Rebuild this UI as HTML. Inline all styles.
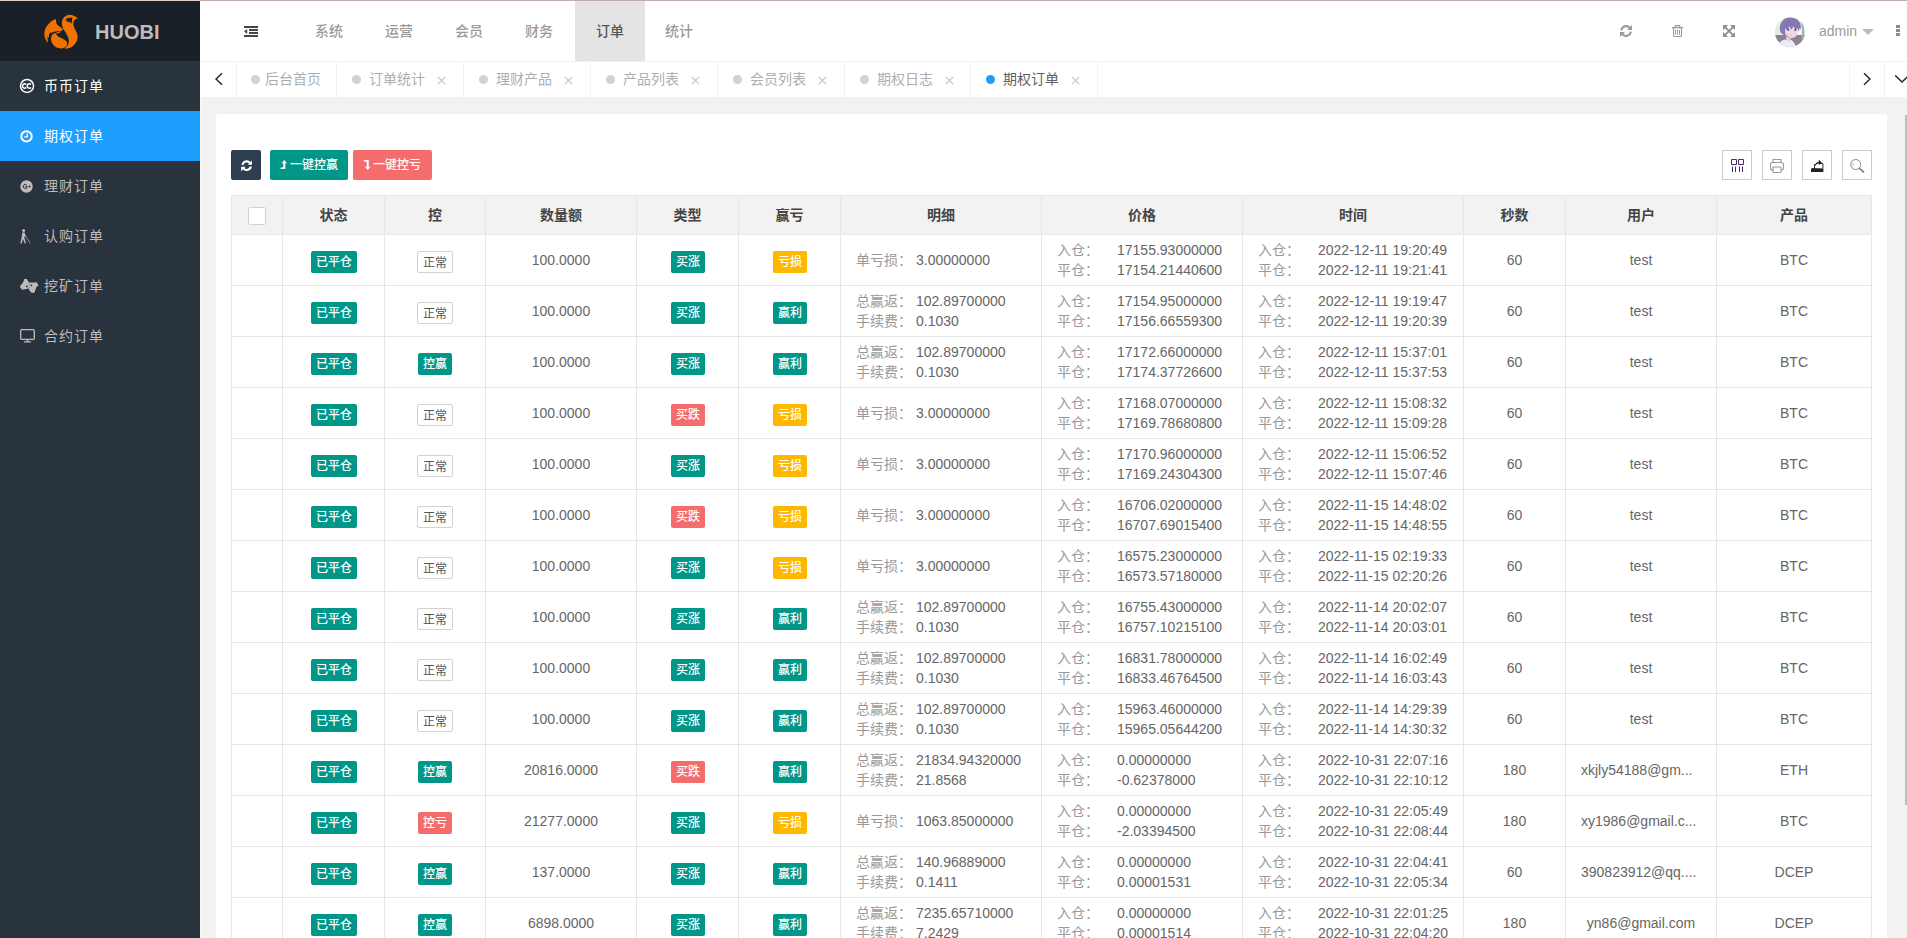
<!DOCTYPE html>
<html lang="zh-CN">
<head>
<meta charset="utf-8">
<title>HUOBI</title>
<style>
*{box-sizing:border-box;margin:0;padding:0}
html,body{width:1907px;height:938px;overflow:hidden;background:#f2f2f2;font-family:"Liberation Sans","Noto Sans CJK SC",sans-serif;font-size:14px;color:#666}
body{position:relative}
.abs{position:absolute}
#topline{left:0;top:0;width:1907px;height:1px;background:linear-gradient(90deg,#dccdc7 0,#dccdc7 200px,#c0aea8 200px);z-index:10}
/* sidebar */
#side{left:0;top:0;width:200px;height:938px;background:#28333e}
#logo{left:0;top:0;width:200px;height:61px;background:#192027}
#logo svg{position:absolute;left:38px;top:8px}
#logo h1{position:absolute;left:95px;top:20px;font-size:20px;line-height:24px;font-weight:bold;color:rgb(191,187,187);letter-spacing:0}
.mi{position:absolute;left:0;width:200px;height:50px;color:rgb(191,187,187);font-size:14px;line-height:50px;letter-spacing:1px}
.mi span{position:absolute;left:44px;top:0}
.mi svg{position:absolute}
.mi.on{background:#1e9fff;color:#fff}
.mi.hv{color:#fff}
/* header */
#header{left:200px;top:1px;width:1707px;height:60px;background:#fff}
.nav{position:absolute;top:0;height:60px;width:70px;text-align:center;line-height:60px;color:rgba(107,107,107,.7);font-size:14px;font-weight:500}
.nav.on{background:#e4e4e4;color:#565656}
/* tabs */
#tabs{left:200px;top:61px;width:1707px;height:36px;background:#fff;border-top:1px solid #f0f0f0}
.tab{position:absolute;top:0;height:35px;line-height:35px;border-right:1px solid #f2f2f2;color:#acafb1;font-size:14px}
.tab i{position:absolute;top:13px;width:9px;height:9px;border-radius:50%;background:#d2d2d2}
.tab.on{color:#5f5f5f}
.tab.on i{background:#1e9fff}
.tab b{position:absolute;font-weight:normal}
.tab svg{position:absolute}
/* card */
#card{left:216px;top:114px;width:1671px;height:900px;background:#fff;border-radius:3px}
.btn{position:absolute;top:150px;height:30px;border-radius:2px;color:#fff;font-size:12px;line-height:30px;white-space:nowrap;font-weight:500}
.tool{position:absolute;top:150px;width:30px;height:30px;border:1px solid #ccc;background:#fff}
.tool svg{position:absolute;left:0;top:0}
/* table */
#tbl{left:231px;top:195px;width:1641px;border-left:1px solid #e6e6e6;border-top:1px solid #e6e6e6;font-size:14px;color:#666}
.tr,.th{display:flex}
.th{height:39px;background:#f2f2f2;color:#444;font-weight:bold}
.tr{height:51px}
.c{flex:none;height:100%;border-right:1px solid #e6e6e6;border-bottom:1px solid #e6e6e6;display:flex;align-items:center;justify-content:center;white-space:nowrap;overflow:hidden}
.c.l{justify-content:flex-start;padding-left:15px}
.th .c{padding-bottom:3px}
.kv{line-height:20px}
.k{display:inline-block;width:60px;color:#999}
.cb{display:block;width:18px;height:18px;border:1px solid #d2d2d2;border-radius:2px;background:#fff;position:relative;left:-.5px;top:2.500px}
.bd{display:inline-block;height:22px;line-height:23px;padding:0 5px;font-size:12px;font-weight:500;border-radius:2px;color:#fff;position:relative;top:2px;left:.5px}
.bd.g{background:#009688}
.bd.r{background:#f56c6c}
.bd.o{background:#ffb800}
.bd.rim{background:#fff;color:#555;border:1px solid #d2d2d2;line-height:23px;font-weight:400;left:0}
.c2 .bd{left:0}
#sb{left:1905px;top:115px;width:2px;height:690px;background:#bdbdbd}
</style>
</head>
<body>
<div id="topline" class="abs"></div>

<div id="side" class="abs">
  <div id="logo" class="abs">
    <svg width="48" height="48" viewBox="0 0 48 48">
      <path fill="#f07300" d="M39.900 10.500C37.200 8 34.600 6.800 31.700 6.800 27.300 6.800 23.700 10.500 23.800 15.400 23.900 19 25.900 21.800 27.600 24.600 29.500 27.800 30.800 30.400 30.800 33.300 30.800 36.400 29.200 38.700 26.500 40.700 31 41.200 35 38.800 37.500 35.300 40 31.700 40.400 28 38.400 24.100 36.700 20.700 35.200 18 35.300 15.400 35.400 12.600 37 11 39.900 10.500Z"/>
      <path fill="#192027" d="M26.800 12.700L29 10.200 34.300 9.500 33.700 16 32.300 13.600 31.300 14.900 30.300 13.100 29.300 14.300 28.400 12.300Z"/>
      <path fill="#f07300" d="M17.800 10.900C14 12.100 10.500 15.300 8.200 18.900 6.200 22.100 5.700 26.100 7.100 30.200 7.700 32 8.700 33.500 10.100 34.500L9.300 28.600 10.900 29.800 11 26.600 12.500 24.300 13.200 25.100C15.600 23.300 19 22.700 22.400 23.500L25.200 21.200 21.500 18.400C19.800 17 18.600 16 18.400 15.400Z"/>
      <path fill="#f07300" d="M17.900 25C15 25.300 13 27.500 13 30.600 13 35.600 17 40.300 22.500 40.500 25 40.600 27.500 39.600 28.600 37.800 29.600 36 29.300 34.200 28.400 33.200 27 31.500 23 30 20.500 28.700 19 27.800 18.200 26.500 17.900 25Z"/>
      <path fill="#f07300" d="M18 24.600L22.600 23.800 21.600 25 18.400 25.400Z"/>
      <circle cx="17.700" cy="19.200" r=".7" fill="#c96000"/>
    </svg>
    <h1>HUOBI</h1>
  </div>

  <div class="mi hv" style="top:61px">
    <svg style="left:19px;top:17px" width="16" height="16" viewBox="0 0 16 16"><circle cx="8.050" cy="7.950" r="6.500" fill="none" stroke="#fff" stroke-width="1.500"/><path d="M7.300 6.400A2.200 2.200 0 1 0 7.300 9.500M12 6.400A2.200 2.200 0 1 0 12 9.500" fill="none" stroke="#fff" stroke-width="1.500"/></svg>
    <span>币币订单</span>
  </div>
  <div class="mi on" style="top:111px">
    <svg style="left:19.800px;top:18.600px" width="13" height="13" viewBox="0 0 13 13"><circle cx="6.500" cy="6.400" r="5.200" fill="none" stroke="#fff" stroke-width="2"/><path d="M7.300 3.500v3.300H4.200" fill="none" stroke="#fff" stroke-width="1.300"/></svg>
    <span>期权订单</span>
  </div>
  <div class="mi" style="top:161px">
    <svg style="left:20px;top:18.500px" width="13" height="13" viewBox="0 0 13 13"><circle cx="6.500" cy="6.500" r="6.200" fill="#bfbbbb"/><path d="M6.800 5.200a2 2 0 1 0 .4 1.500H5.400" fill="none" stroke="#28333e" stroke-width="1"/><path d="M9.600 5.400v2.200M8.500 6.500h2.200" stroke="#28333e" stroke-width=".8"/></svg>
    <span>理财订单</span>
  </div>
  <div class="mi" style="top:211px">
    <svg style="left:19px;top:18px" width="14" height="15" viewBox="0 0 14 15"><circle cx="4.600" cy="1.600" r="1.500" fill="#bfbbbb"/><path d="M3.200 3.600h2.400l1.400 4-1 .5-.6-1.500v2.200l1.600 5.400-1.300.4-1.700-4.600-1.500 4.700-1.300-.4 1.400-5.600z" fill="#bfbbbb"/><path d="M6.300 6.600l5 7.800" stroke="#bfbbbb" stroke-width=".7"/></svg>
    <span>认购订单</span>
  </div>
  <div class="mi" style="top:261px">
    <svg style="left:19px;top:18px" width="20" height="15" viewBox="0 0 20 15"><path d="M.8 7.700L4.600 2.600 5.200 0h2.600L10 3.500l6.100 0 1.300-.6 2.200 3.500-2.200 1.600-1.900 5.500-2.600.6-2.600-2.600L10 9.600 3 10.750z" fill="#bfbbbb"/><circle cx="7.800" cy="7.400" r=".9" fill="#28333e"/><circle cx="12.400" cy="6.400" r=".9" fill="#28333e"/><path d="M10 4v5" stroke="#28333e" stroke-width=".5" stroke-dasharray="1 1"/></svg>
    <span>挖矿订单</span>
  </div>
  <div class="mi" style="top:311px">
    <svg style="left:20px;top:18px" width="15" height="14" viewBox="0 0 15 14"><rect x=".7" y=".7" width="13.600" height="9.600" rx="1" fill="none" stroke="#bfbbbb" stroke-width="1.300"/><path d="M7.500 10.500v2M4 12.800h7" stroke="#bfbbbb" stroke-width="1.300"/></svg>
    <span>合约订单</span>
  </div>
</div>

<div id="header" class="abs">
  <svg class="abs" style="left:44px;top:25px" width="14" height="11" viewBox="0 0 14 11"><path d="M0 0h14v2H0zM5 3h9v2H5zM5 6h9v2H5zM0 9h14v2H0zM.1 5.500L3.200 2.900v5.200z" fill="#444"/></svg>
  <div class="nav" style="left:94px">系统</div>
  <div class="nav" style="left:164px">运营</div>
  <div class="nav" style="left:234px">会员</div>
  <div class="nav" style="left:304px">财务</div>
  <div class="nav on" style="left:375px">订单</div>
  <div class="nav" style="left:444px">统计</div>

  <!-- refresh -->
  <svg class="abs" style="left:1419.900px;top:23.800px" width="12.100" height="12.100" viewBox="0 0 14 14"><path d="M1.500 6.200A5.600 5.600 0 0 1 11.400 3.400M12.500 7.800A5.600 5.600 0 0 1 2.600 10.600" fill="none" stroke="#9a9a9a" stroke-width="2.400"/><path d="M14 0v5.800H8.200zM0 14V8.200h5.800z" fill="#9a9a9a"/></svg>
  <!-- trash -->
  <svg class="abs" style="left:1472px;top:23.800px" width="11" height="12.100" viewBox="0 0 11 12.100"><path d="M0 2.600h11M3.200 2.300V.6h4.600v1.700" fill="none" stroke="#9a9a9a" stroke-width="1.100"/><path d="M1.500 3v7.500a1 1 0 0 0 1 1h6a1 1 0 0 0 1-1V3" fill="none" stroke="#9a9a9a" stroke-width="1.100"/><path d="M3.500 4.800v4.800M5.500 4.800v4.800M7.500 4.800v4.800" stroke="#9a9a9a" stroke-width="1"/></svg>
  <!-- expand -->
  <svg class="abs" style="left:1523.100px;top:23.800px" width="12.100" height="12.100" viewBox="0 0 14 14"><path d="M2.500 2.500l9 9M11.500 2.500l-9 9" stroke="#8f8f8f" stroke-width="2.200"/><path d="M0 0h6L0 6zM14 0v6L8 0zM0 14V8L6 14zM14 14H8L14 8z" fill="#8f8f8f"/></svg>
  <!-- avatar -->
  <svg class="abs" style="left:1575px;top:16px" width="30" height="30" viewBox="0 0 30 30">
    <defs><clipPath id="av"><circle cx="15" cy="15" r="15"/></clipPath>
    <linearGradient id="avbg" x1="0" x2="1" y1="0" y2="0"><stop offset="0" stop-color="#dfe9dc"/><stop offset=".35" stop-color="#f1f5ee"/><stop offset="1" stop-color="#f7f8f6"/></linearGradient></defs>
    <g clip-path="url(#av)">
      <rect width="30" height="30" fill="url(#avbg)"/>
      <rect x="0" y="18.300" width="30" height="12" fill="#8a8391"/>
      <rect x="0" y="18" width="30" height=".8" fill="#a57a5c"/>
      <path d="M26.500 4c2.500 3 3.600 9 2.200 20l-2.200-2c.8-7 .8-12-1-17z" fill="#a3b0aa"/>
      <path d="M3.600 27c1.500-2.600 3.400-3.800 5.800-4.600l4.600 1.200 1.600-1.200c2.600 1.600 4.200 3.800 5 6.600-2 1-4 1.500-6 1.500-4 0-7.500-1.300-11-3.500z" fill="#efecf6"/>
      <path d="M10.800 19.500l4.500 1.500-.3 4.200-3.300-1.500z" fill="#ecd0da"/>
      <path d="M8.600 10h14v7.500c-1.600 2-3.800 3.400-6 3.800-3.200-.6-6-3-8-6.800z" fill="#f0d6de"/>
      <path d="M5 14C3.800 6.500 8 .5 15 .4c7.500-.1 12.300 5 10.600 12.600l-.9-2.200-.9 3.600-1.600-3.600-1.200 2.400-2.400-3.600-2.400 3-1.800-3.200-2.800 3.400-1.200-1.600c-.6 2.400-.6 4.800.6 7.200C8 18 6 16.500 5 14z" fill="#8379b6"/>
      <ellipse cx="13.200" cy="12.500" rx="1" ry="1.300" fill="#4e4a86"/>
      <ellipse cx="20.300" cy="12.800" rx=".9" ry="1.300" fill="#4e4a86"/>
      <ellipse cx="16.500" cy="18" rx=".5" ry=".4" fill="#c9858f"/>
    </g>
  </svg>
  <div class="abs" style="left:1619px;top:0;line-height:60px;font-size:14px;color:rgba(107,107,107,.7)">admin</div>
  <div class="abs" style="left:1662px;top:28px;width:0;height:0;border:6px solid transparent;border-top-color:rgba(160,160,160,.7)"></div>
  <div class="abs" style="left:1696px;top:24px;width:4px;height:3px;background:#8c8c8c;box-shadow:0 4px 0 #8c8c8c,0 8px 0 #8c8c8c"></div>
</div>

<div id="tabs" class="abs">
  <div class="tab" style="left:0;width:37px">
    <svg style="left:14px;top:10px" width="10" height="14" viewBox="0 0 10 14"><path d="M8 1.200L2 7l6 5.800" fill="none" stroke="#222" stroke-width="1.400"/></svg>
  </div>
  <div class="tab" style="left:37px;width:100px"><i style="left:14px"></i><b style="left:28px">后台首页</b></div>
  <div class="tab" style="left:137px;width:127px"><i style="left:15px"></i><b style="left:32px">订单统计</b><svg style="left:100px;top:14px" width="9" height="9" viewBox="0 0 9 9"><path d="M.8.800l7.400 7.400M8.200.8L.8 8.200" stroke="#c4c4c4" stroke-width="1.200"/></svg></div>
  <div class="tab" style="left:264px;width:127px"><i style="left:15px"></i><b style="left:32px">理财产品</b><svg style="left:100px;top:14px" width="9" height="9" viewBox="0 0 9 9"><path d="M.8.800l7.400 7.400M8.200.8L.8 8.200" stroke="#c4c4c4" stroke-width="1.200"/></svg></div>
  <div class="tab" style="left:391px;width:127px"><i style="left:15px"></i><b style="left:32px">产品列表</b><svg style="left:100px;top:14px" width="9" height="9" viewBox="0 0 9 9"><path d="M.8.800l7.400 7.400M8.200.8L.8 8.200" stroke="#c4c4c4" stroke-width="1.200"/></svg></div>
  <div class="tab" style="left:518px;width:127px"><i style="left:15px"></i><b style="left:32px">会员列表</b><svg style="left:100px;top:14px" width="9" height="9" viewBox="0 0 9 9"><path d="M.8.800l7.400 7.400M8.200.8L.8 8.200" stroke="#c4c4c4" stroke-width="1.200"/></svg></div>
  <div class="tab" style="left:645px;width:126px"><i style="left:15px"></i><b style="left:32px">期权日志</b><svg style="left:100px;top:14px" width="9" height="9" viewBox="0 0 9 9"><path d="M.8.800l7.400 7.400M8.200.8L.8 8.200" stroke="#c4c4c4" stroke-width="1.200"/></svg></div>
  <div class="tab on" style="left:771px;width:127px"><i style="left:15px"></i><b style="left:32px">期权订单</b><svg style="left:100px;top:14px" width="9" height="9" viewBox="0 0 9 9"><path d="M.8.800l7.400 7.400M8.200.8L.8 8.200" stroke="#c4c4c4" stroke-width="1.200"/></svg></div>
  <div class="tab" style="left:1649px;width:36px;border-left:1px solid #f2f2f2">
    <svg style="left:12px;top:10px" width="10" height="14" viewBox="0 0 10 14"><path d="M2 1.200L8 7l-6 5.800" fill="none" stroke="#222" stroke-width="1.400"/></svg>
  </div>
  <div class="tab" style="left:1685px;width:36px;border-right:none">
    <svg style="left:9px;top:12px" width="16" height="10" viewBox="0 0 16 10"><path d="M1.200 1.500L8 8l6.800-6.500" fill="none" stroke="#222" stroke-width="1.400"/></svg>
  </div>
</div>

<div class="abs" style="left:200px;top:97px;width:1px;height:841px;background:#fbf7f3"></div>
<div id="card" class="abs"></div>

<!-- toolbar -->
<div class="btn" style="left:231px;width:30px;background:#2c3e50">
  <svg class="abs" style="left:9.900px;top:9.800px" width="11.400" height="11.400" viewBox="0 0 14 14"><path d="M1.900 6A5.150 5.150 0 0 1 11 3.700M12.100 8A5.150 5.150 0 0 1 3 10.300" fill="none" stroke="#fff" stroke-width="2.600"/><path d="M13.800.3v5.500H8.300zM.2 13.700V8.200h5.500z" fill="#fff"/></svg>
</div>
<div class="btn" style="left:270px;width:78px;background:#009688">
  <svg class="abs" style="left:10px;top:10px" width="7" height="9" viewBox="0 0 7 9"><path d="M4.300 0L7 3.200H5.300V9H.2L1.500 7.300h1.800V3.200H1.600z" fill="#fff"/></svg>
  <span class="abs" style="left:20px;top:0">一键控赢</span>
</div>
<div class="btn" style="left:353px;width:79px;background:#f56c6c">
  <svg class="abs" style="left:10px;top:10px" width="7.500" height="10" viewBox="0 0 7.500 10"><path d="M4.700 10L7.500 6.700H5.700V0H.2L1.600 1.700h2.100v5H1.900z" fill="#fff"/></svg>
  <span class="abs" style="left:20px;top:0">一键控亏</span>
</div>

<div class="tool" style="left:1722px">
  <svg width="28" height="28" viewBox="0 0 28 28"><path d="M8.500 8.500h5v5h-5zM15.500 8.500h5v5h-5z" fill="none" stroke="#4f2a6a" stroke-width="1"/><path d="M9.500 15.500v5.500M12.500 15.500v5.500M16.500 15.500v5.500M19.500 15.500v5.500" stroke="#4f2a6a" stroke-width="1"/></svg>
</div>
<div class="tool" style="left:1762px">
  <svg width="28" height="28" viewBox="0 0 28 28"><path d="M10 12V8.500h8V12" fill="none" stroke="#9a9a9a" stroke-width="1.100"/><rect x="7.500" y="11.500" width="13" height="7.500" rx="2" fill="none" stroke="#9a9a9a" stroke-width="1.100"/><rect x="10" y="16" width="8" height="5.500" rx=".8" fill="#fff" stroke="#9a9a9a" stroke-width="1.100"/></svg>
</div>
<div class="tool" style="left:1802px">
  <svg width="28" height="28" viewBox="0 0 28 28"><path d="M9.300 17l-1.300 1v3h12.400v-3.500z" fill="#222"/><path d="M11.500 17.500v-4h1.500M16.500 12.500h3.400v5" fill="none" stroke="#2a2a40" stroke-width="1"/><path d="M12 15.500c.1-3 1.600-4.500 3.800-4.700V8.700l3 2.800-3 2.800v-1.900c-1.700 0-2.900.9-3.800 3.100z" fill="#222"/></svg>
</div>
<div class="tool" style="left:1842px">
  <svg width="28" height="28" viewBox="0 0 28 28"><circle cx="12.700" cy="13.500" r="5" fill="none" stroke="#8a8a8a" stroke-width="1"/><path d="M10.200 12a3.200 3.200 0 0 0 0 2.800" fill="none" stroke="#9ab" stroke-width=".8"/><path d="M16.500 17.300l4 3.700" stroke="#8a8a8a" stroke-width="1.800" stroke-linecap="round"/></svg>
</div>

<div id="tbl" class="abs">
  <div class="th"><div class="c" style="width:51px"><span class="cb"></span></div><div class="c" style="width:102px">状态</div><div class="c" style="width:101px">控</div><div class="c" style="width:151px">数量额</div><div class="c" style="width:102px">类型</div><div class="c" style="width:102px">赢亏</div><div class="c" style="width:201px">明细</div><div class="c" style="width:201px">价格</div><div class="c" style="width:221px">时间</div><div class="c" style="width:102px">秒数</div><div class="c" style="width:151px">用户</div><div class="c" style="width:155px">产品</div></div>
<div class="tr"><div class="c" style="width:51px"></div><div class="c" style="width:102px"><span class="bd g">已平仓</span></div><div class="c c2" style="width:101px"><span class="bd rim">正常</span></div><div class="c" style="width:151px">100.0000</div><div class="c" style="width:102px"><span class="bd g">买涨</span></div><div class="c" style="width:102px"><span class="bd o">亏损</span></div><div class="c l" style="width:201px"><div class="kv"><div><span class="k">单亏损：</span>3.00000000</div></div></div><div class="c l" style="width:201px"><div class="kv"><div><span class="k">入仓：</span>17155.93000000</div><div><span class="k">平仓：</span>17154.21440600</div></div></div><div class="c l" style="width:221px"><div class="kv"><div><span class="k">入仓：</span>2022-12-11 19:20:49</div><div><span class="k">平仓：</span>2022-12-11 19:21:41</div></div></div><div class="c" style="width:102px">60</div><div class="c" style="width:151px">test</div><div class="c" style="width:155px">BTC</div></div>
<div class="tr"><div class="c" style="width:51px"></div><div class="c" style="width:102px"><span class="bd g">已平仓</span></div><div class="c c2" style="width:101px"><span class="bd rim">正常</span></div><div class="c" style="width:151px">100.0000</div><div class="c" style="width:102px"><span class="bd g">买涨</span></div><div class="c" style="width:102px"><span class="bd g">赢利</span></div><div class="c l" style="width:201px"><div class="kv"><div><span class="k">总赢返：</span>102.89700000</div><div><span class="k">手续费：</span>0.1030</div></div></div><div class="c l" style="width:201px"><div class="kv"><div><span class="k">入仓：</span>17154.95000000</div><div><span class="k">平仓：</span>17156.66559300</div></div></div><div class="c l" style="width:221px"><div class="kv"><div><span class="k">入仓：</span>2022-12-11 19:19:47</div><div><span class="k">平仓：</span>2022-12-11 19:20:39</div></div></div><div class="c" style="width:102px">60</div><div class="c" style="width:151px">test</div><div class="c" style="width:155px">BTC</div></div>
<div class="tr"><div class="c" style="width:51px"></div><div class="c" style="width:102px"><span class="bd g">已平仓</span></div><div class="c c2" style="width:101px"><span class="bd g">控赢</span></div><div class="c" style="width:151px">100.0000</div><div class="c" style="width:102px"><span class="bd g">买涨</span></div><div class="c" style="width:102px"><span class="bd g">赢利</span></div><div class="c l" style="width:201px"><div class="kv"><div><span class="k">总赢返：</span>102.89700000</div><div><span class="k">手续费：</span>0.1030</div></div></div><div class="c l" style="width:201px"><div class="kv"><div><span class="k">入仓：</span>17172.66000000</div><div><span class="k">平仓：</span>17174.37726600</div></div></div><div class="c l" style="width:221px"><div class="kv"><div><span class="k">入仓：</span>2022-12-11 15:37:01</div><div><span class="k">平仓：</span>2022-12-11 15:37:53</div></div></div><div class="c" style="width:102px">60</div><div class="c" style="width:151px">test</div><div class="c" style="width:155px">BTC</div></div>
<div class="tr"><div class="c" style="width:51px"></div><div class="c" style="width:102px"><span class="bd g">已平仓</span></div><div class="c c2" style="width:101px"><span class="bd rim">正常</span></div><div class="c" style="width:151px">100.0000</div><div class="c" style="width:102px"><span class="bd r">买跌</span></div><div class="c" style="width:102px"><span class="bd o">亏损</span></div><div class="c l" style="width:201px"><div class="kv"><div><span class="k">单亏损：</span>3.00000000</div></div></div><div class="c l" style="width:201px"><div class="kv"><div><span class="k">入仓：</span>17168.07000000</div><div><span class="k">平仓：</span>17169.78680800</div></div></div><div class="c l" style="width:221px"><div class="kv"><div><span class="k">入仓：</span>2022-12-11 15:08:32</div><div><span class="k">平仓：</span>2022-12-11 15:09:28</div></div></div><div class="c" style="width:102px">60</div><div class="c" style="width:151px">test</div><div class="c" style="width:155px">BTC</div></div>
<div class="tr"><div class="c" style="width:51px"></div><div class="c" style="width:102px"><span class="bd g">已平仓</span></div><div class="c c2" style="width:101px"><span class="bd rim">正常</span></div><div class="c" style="width:151px">100.0000</div><div class="c" style="width:102px"><span class="bd g">买涨</span></div><div class="c" style="width:102px"><span class="bd o">亏损</span></div><div class="c l" style="width:201px"><div class="kv"><div><span class="k">单亏损：</span>3.00000000</div></div></div><div class="c l" style="width:201px"><div class="kv"><div><span class="k">入仓：</span>17170.96000000</div><div><span class="k">平仓：</span>17169.24304300</div></div></div><div class="c l" style="width:221px"><div class="kv"><div><span class="k">入仓：</span>2022-12-11 15:06:52</div><div><span class="k">平仓：</span>2022-12-11 15:07:46</div></div></div><div class="c" style="width:102px">60</div><div class="c" style="width:151px">test</div><div class="c" style="width:155px">BTC</div></div>
<div class="tr"><div class="c" style="width:51px"></div><div class="c" style="width:102px"><span class="bd g">已平仓</span></div><div class="c c2" style="width:101px"><span class="bd rim">正常</span></div><div class="c" style="width:151px">100.0000</div><div class="c" style="width:102px"><span class="bd r">买跌</span></div><div class="c" style="width:102px"><span class="bd o">亏损</span></div><div class="c l" style="width:201px"><div class="kv"><div><span class="k">单亏损：</span>3.00000000</div></div></div><div class="c l" style="width:201px"><div class="kv"><div><span class="k">入仓：</span>16706.02000000</div><div><span class="k">平仓：</span>16707.69015400</div></div></div><div class="c l" style="width:221px"><div class="kv"><div><span class="k">入仓：</span>2022-11-15 14:48:02</div><div><span class="k">平仓：</span>2022-11-15 14:48:55</div></div></div><div class="c" style="width:102px">60</div><div class="c" style="width:151px">test</div><div class="c" style="width:155px">BTC</div></div>
<div class="tr"><div class="c" style="width:51px"></div><div class="c" style="width:102px"><span class="bd g">已平仓</span></div><div class="c c2" style="width:101px"><span class="bd rim">正常</span></div><div class="c" style="width:151px">100.0000</div><div class="c" style="width:102px"><span class="bd g">买涨</span></div><div class="c" style="width:102px"><span class="bd o">亏损</span></div><div class="c l" style="width:201px"><div class="kv"><div><span class="k">单亏损：</span>3.00000000</div></div></div><div class="c l" style="width:201px"><div class="kv"><div><span class="k">入仓：</span>16575.23000000</div><div><span class="k">平仓：</span>16573.57180000</div></div></div><div class="c l" style="width:221px"><div class="kv"><div><span class="k">入仓：</span>2022-11-15 02:19:33</div><div><span class="k">平仓：</span>2022-11-15 02:20:26</div></div></div><div class="c" style="width:102px">60</div><div class="c" style="width:151px">test</div><div class="c" style="width:155px">BTC</div></div>
<div class="tr"><div class="c" style="width:51px"></div><div class="c" style="width:102px"><span class="bd g">已平仓</span></div><div class="c c2" style="width:101px"><span class="bd rim">正常</span></div><div class="c" style="width:151px">100.0000</div><div class="c" style="width:102px"><span class="bd g">买涨</span></div><div class="c" style="width:102px"><span class="bd g">赢利</span></div><div class="c l" style="width:201px"><div class="kv"><div><span class="k">总赢返：</span>102.89700000</div><div><span class="k">手续费：</span>0.1030</div></div></div><div class="c l" style="width:201px"><div class="kv"><div><span class="k">入仓：</span>16755.43000000</div><div><span class="k">平仓：</span>16757.10215100</div></div></div><div class="c l" style="width:221px"><div class="kv"><div><span class="k">入仓：</span>2022-11-14 20:02:07</div><div><span class="k">平仓：</span>2022-11-14 20:03:01</div></div></div><div class="c" style="width:102px">60</div><div class="c" style="width:151px">test</div><div class="c" style="width:155px">BTC</div></div>
<div class="tr"><div class="c" style="width:51px"></div><div class="c" style="width:102px"><span class="bd g">已平仓</span></div><div class="c c2" style="width:101px"><span class="bd rim">正常</span></div><div class="c" style="width:151px">100.0000</div><div class="c" style="width:102px"><span class="bd g">买涨</span></div><div class="c" style="width:102px"><span class="bd g">赢利</span></div><div class="c l" style="width:201px"><div class="kv"><div><span class="k">总赢返：</span>102.89700000</div><div><span class="k">手续费：</span>0.1030</div></div></div><div class="c l" style="width:201px"><div class="kv"><div><span class="k">入仓：</span>16831.78000000</div><div><span class="k">平仓：</span>16833.46764500</div></div></div><div class="c l" style="width:221px"><div class="kv"><div><span class="k">入仓：</span>2022-11-14 16:02:49</div><div><span class="k">平仓：</span>2022-11-14 16:03:43</div></div></div><div class="c" style="width:102px">60</div><div class="c" style="width:151px">test</div><div class="c" style="width:155px">BTC</div></div>
<div class="tr"><div class="c" style="width:51px"></div><div class="c" style="width:102px"><span class="bd g">已平仓</span></div><div class="c c2" style="width:101px"><span class="bd rim">正常</span></div><div class="c" style="width:151px">100.0000</div><div class="c" style="width:102px"><span class="bd g">买涨</span></div><div class="c" style="width:102px"><span class="bd g">赢利</span></div><div class="c l" style="width:201px"><div class="kv"><div><span class="k">总赢返：</span>102.89700000</div><div><span class="k">手续费：</span>0.1030</div></div></div><div class="c l" style="width:201px"><div class="kv"><div><span class="k">入仓：</span>15963.46000000</div><div><span class="k">平仓：</span>15965.05644200</div></div></div><div class="c l" style="width:221px"><div class="kv"><div><span class="k">入仓：</span>2022-11-14 14:29:39</div><div><span class="k">平仓：</span>2022-11-14 14:30:32</div></div></div><div class="c" style="width:102px">60</div><div class="c" style="width:151px">test</div><div class="c" style="width:155px">BTC</div></div>
<div class="tr"><div class="c" style="width:51px"></div><div class="c" style="width:102px"><span class="bd g">已平仓</span></div><div class="c c2" style="width:101px"><span class="bd g">控赢</span></div><div class="c" style="width:151px">20816.0000</div><div class="c" style="width:102px"><span class="bd r">买跌</span></div><div class="c" style="width:102px"><span class="bd g">赢利</span></div><div class="c l" style="width:201px"><div class="kv"><div><span class="k">总赢返：</span>21834.94320000</div><div><span class="k">手续费：</span>21.8568</div></div></div><div class="c l" style="width:201px"><div class="kv"><div><span class="k">入仓：</span>0.00000000</div><div><span class="k">平仓：</span>-0.62378000</div></div></div><div class="c l" style="width:221px"><div class="kv"><div><span class="k">入仓：</span>2022-10-31 22:07:16</div><div><span class="k">平仓：</span>2022-10-31 22:10:12</div></div></div><div class="c" style="width:102px">180</div><div class="c l" style="width:151px">xkjly54188@gm...</div><div class="c" style="width:155px">ETH</div></div>
<div class="tr"><div class="c" style="width:51px"></div><div class="c" style="width:102px"><span class="bd g">已平仓</span></div><div class="c c2" style="width:101px"><span class="bd r">控亏</span></div><div class="c" style="width:151px">21277.0000</div><div class="c" style="width:102px"><span class="bd g">买涨</span></div><div class="c" style="width:102px"><span class="bd o">亏损</span></div><div class="c l" style="width:201px"><div class="kv"><div><span class="k">单亏损：</span>1063.85000000</div></div></div><div class="c l" style="width:201px"><div class="kv"><div><span class="k">入仓：</span>0.00000000</div><div><span class="k">平仓：</span>-2.03394500</div></div></div><div class="c l" style="width:221px"><div class="kv"><div><span class="k">入仓：</span>2022-10-31 22:05:49</div><div><span class="k">平仓：</span>2022-10-31 22:08:44</div></div></div><div class="c" style="width:102px">180</div><div class="c l" style="width:151px">xy1986@gmail.c...</div><div class="c" style="width:155px">BTC</div></div>
<div class="tr"><div class="c" style="width:51px"></div><div class="c" style="width:102px"><span class="bd g">已平仓</span></div><div class="c c2" style="width:101px"><span class="bd g">控赢</span></div><div class="c" style="width:151px">137.0000</div><div class="c" style="width:102px"><span class="bd g">买涨</span></div><div class="c" style="width:102px"><span class="bd g">赢利</span></div><div class="c l" style="width:201px"><div class="kv"><div><span class="k">总赢返：</span>140.96889000</div><div><span class="k">手续费：</span>0.1411</div></div></div><div class="c l" style="width:201px"><div class="kv"><div><span class="k">入仓：</span>0.00000000</div><div><span class="k">平仓：</span>0.00001531</div></div></div><div class="c l" style="width:221px"><div class="kv"><div><span class="k">入仓：</span>2022-10-31 22:04:41</div><div><span class="k">平仓：</span>2022-10-31 22:05:34</div></div></div><div class="c" style="width:102px">60</div><div class="c l" style="width:151px">390823912@qq....</div><div class="c" style="width:155px">DCEP</div></div>
<div class="tr"><div class="c" style="width:51px"></div><div class="c" style="width:102px"><span class="bd g">已平仓</span></div><div class="c c2" style="width:101px"><span class="bd g">控赢</span></div><div class="c" style="width:151px">6898.0000</div><div class="c" style="width:102px"><span class="bd g">买涨</span></div><div class="c" style="width:102px"><span class="bd g">赢利</span></div><div class="c l" style="width:201px"><div class="kv"><div><span class="k">总赢返：</span>7235.65710000</div><div><span class="k">手续费：</span>7.2429</div></div></div><div class="c l" style="width:201px"><div class="kv"><div><span class="k">入仓：</span>0.00000000</div><div><span class="k">平仓：</span>0.00001514</div></div></div><div class="c l" style="width:221px"><div class="kv"><div><span class="k">入仓：</span>2022-10-31 22:01:25</div><div><span class="k">平仓：</span>2022-10-31 22:04:20</div></div></div><div class="c" style="width:102px">180</div><div class="c" style="width:151px">yn86@gmail.com</div><div class="c" style="width:155px">DCEP</div></div>
</div>

<div id="sb" class="abs"></div>
</body>
</html>
